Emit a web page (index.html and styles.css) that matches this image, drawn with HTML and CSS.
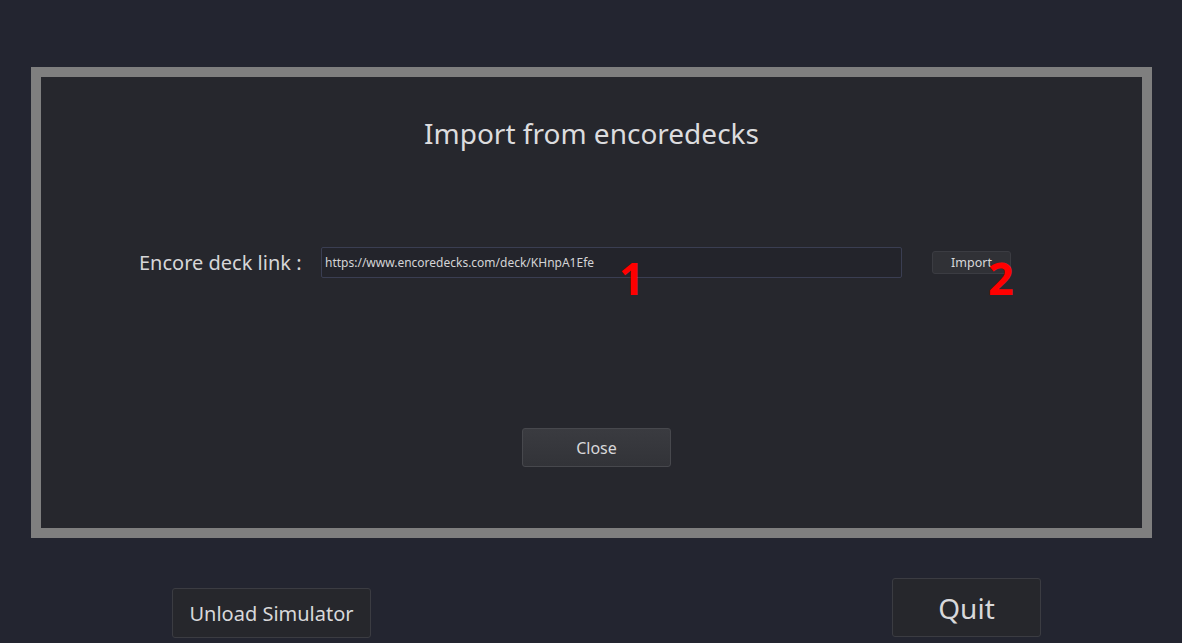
FILE: index.html
```html
<!DOCTYPE html>
<html>
<head>
<meta charset="utf-8">
<link rel="stylesheet" href="styles.css">
</head>
<body>
<div class="screen">
  <div class="dialog">
    <h1 class="title">Import from encoredecks</h1>
    <div class="link-row">
      <span class="label">Encore deck link :</span>
      <div class="input">https://www.encoredecks.com/deck/KHnpA1Efe</div>
      <button class="btn btn-small">Import</button>
      <span class="marker marker-1">1</span>
      <span class="marker marker-2">2</span>
    </div>
    <div class="close-row">
      <button class="btn btn-close">Close</button>
    </div>
  </div>
  <div class="bottom-row">
    <button class="btn btn-unload">Unload Simulator</button>
    <button class="btn btn-quit">Quit</button>
  </div>
</div>
</body>
</html>
```
FILE: styles.css
```css
html, body {
  margin: 0;
  padding: 0;
  background: #232530;
  height: 643px;
  overflow: hidden;
  font-family: "Noto Sans", "Open Sans", sans-serif;
  color: #d8d8da;
}
.screen {
  padding-top: 67px;
  padding-left: 31px;
}
.dialog {
  box-sizing: border-box;
  width: 1121px;
  height: 471px;
  border: 10px solid #7f7f7f;
  background: #26272d;
  display: flex;
  flex-direction: column;
  align-items: center;
}
.title {
  margin: 34px 0 0 0;
  font-size: 28px;
  font-weight: normal;
  line-height: 44px;
  color: #dcdcde;
}
.link-row {
  position: relative;
  margin-top: 92px;
  width: 100%;
  display: flex;
  align-items: center;
  height: 31px;
}
.label {
  margin-left: 98px;
  font-size: 20px;
  color: #d6d6d8;
  width: 182px;
}
.input {
  box-sizing: border-box;
  width: 581px;
  height: 31px;
  border: 1px solid #3a3e52;
  border-radius: 2px;
  background: #23242b;
  font-size: 12px;
  line-height: 29px;
  padding-left: 3px;
  color: #d4d4d6;
}
.btn {
  font-family: "Noto Sans", "Open Sans", sans-serif;
  color: #d8d8da;
  border: 1px solid #3b3c42;
  border-radius: 3px;
  background: #2a2b30;
  padding: 0;
  cursor: default;
}
.btn-small {
  margin-left: 30px;
  width: 79px;
  height: 23px;
  font-size: 12.5px;
  line-height: 20px;
  background: #303136;
}
.marker {
  position: absolute;
  color: #ff0000;
  font-weight: bold;
  font-size: 44px;
  line-height: 1;
}
.marker-1 {
  left: 578px;
  top: 9px;
}
.marker-2 {
  left: 947px;
  top: 8px;
  font-size: 45px;
}
.close-row {
  margin-top: 150px;
  margin-left: 10px;
}
.btn-close {
  width: 149px;
  height: 39px;
  font-size: 16px;
  background: linear-gradient(#3a3b40, #323338);
  border-color: #47484d;
}
.bottom-row {
  display: flex;
  align-items: flex-start;
}
.btn-unload {
  margin-left: 141px;
  margin-top: 50px;
  width: 199px;
  height: 50px;
  font-size: 20px;
  background: #26272c;
}
.btn-quit {
  margin-left: 521px;
  margin-top: 40px;
  width: 149px;
  height: 59px;
  font-size: 28px;
  background: #26272c;
}
```
